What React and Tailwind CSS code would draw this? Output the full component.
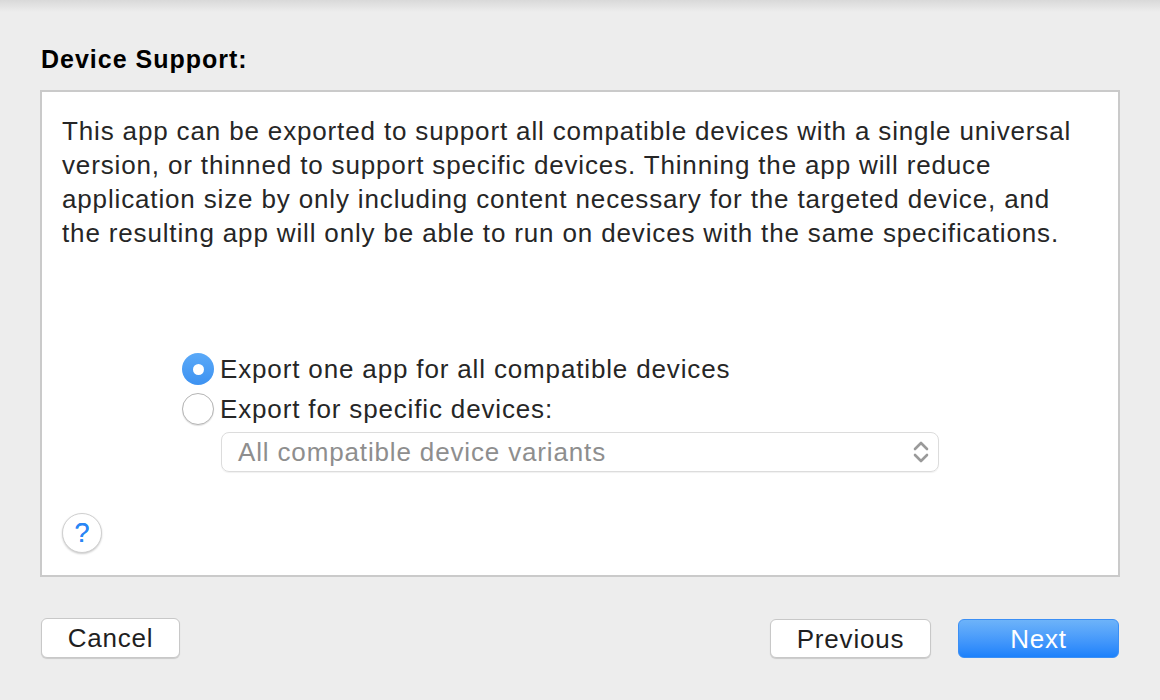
import React from "react";

export default function App() {
  const font = { fontFamily: '"Liberation Sans", Arial, Helvetica, sans-serif' };
  return (
    <div className="relative w-[1160px] h-[700px] bg-[#ededed] overflow-hidden" style={font}>
      <div className="absolute left-0 right-0 top-0 h-[12px] bg-gradient-to-b from-[#d9d9d9] to-[#ededed]" />
      <div className="px-10 pt-[43px] flex flex-col">
        <div className="h-[32px] ml-[1px] text-[25px] font-bold text-black leading-[32px] tracking-[1px]">Device Support:</div>
        <div className="mt-[15px] h-[487px] border-2 border-[#cacaca] bg-white flex flex-col pl-5 pr-[30px] pt-[22px]">
          <p className="text-[26px] leading-[34px] text-[#262626] tracking-[0.85px]">
            This app can be exported to support all compatible devices with a single universal version, or thinned to support specific devices. Thinning the app will reduce application size by only including content necessary for the targeted device, and the resulting app will only be able to run on devices with the same specifications.
          </p>
          <div className="mt-[99px] ml-[120px] flex flex-col">
            <div className="h-[40px] flex items-center">
              <div className="w-[32px] h-[32px] rounded-full bg-gradient-to-b from-[#5aa9f8] to-[#3d92f1] flex items-center justify-center">
                <div className="w-[11px] h-[11px] rounded-full bg-white" />
              </div>
              <span className="ml-[6px] text-[26px] text-[#262626] tracking-[0.85px]">Export one app for all compatible devices</span>
            </div>
            <div className="h-[40px] flex items-center">
              <div className="w-[32px] h-[32px] rounded-full bg-white border border-[#b5b5b5] shadow-[0_1px_1px_rgba(0,0,0,0.12)]" />
              <span className="ml-[6px] text-[26px] text-[#262626] tracking-[0.85px]">Export for specific devices:</span>
            </div>
            <div className="mt-[3px] ml-[39px] w-[718px] h-[40px] rounded-[8px] border border-[#dcdcdc] shadow-[0_1px_1px_rgba(0,0,0,0.06)] flex items-center pl-[16px] pr-[8px]">
              <span className="flex-1 text-[26px] text-[#8e8e8e] tracking-[0.85px]">All compatible device variants</span>
              <svg width="18" height="26" viewBox="0 0 18 26" fill="none" stroke="#9a9a9a" strokeWidth="2.6" strokeLinecap="round" strokeLinejoin="round">
                <path d="M3 10 L9 4 L15 10" />
                <path d="M3 16 L9 22 L15 16" />
              </svg>
            </div>
          </div>
          <div className="mt-[41px] w-[40px] h-[40px] rounded-full bg-white border border-[#d0d0d0] shadow-[0_1px_2px_rgba(0,0,0,0.2)] flex items-center justify-center">
            <span className="text-[27px] text-[#2a86f5] leading-none [text-shadow:0_0_0.6px_#2a86f5]">?</span>
          </div>
        </div>
        <div className="mt-[41px] mr-[1px] flex items-center justify-between">
          <button className="ml-[1px] w-[139px] h-[40px] rounded-[6px] bg-white border border-[#c8c8c8] shadow-[0_1px_1px_rgba(0,0,0,0.15)] text-[26px] text-[#1f1f1f] tracking-[0.8px]">Cancel</button>
          <div className="flex gap-[27px]">
            <button className="w-[161px] h-[39px] rounded-[6px] bg-white border border-[#c8c8c8] shadow-[0_1px_1px_rgba(0,0,0,0.15)] text-[26px] text-[#1f1f1f] tracking-[0.8px]">Previous</button>
            <button className="w-[161px] h-[39px] rounded-[6px] bg-gradient-to-b from-[#6db3f9] to-[#1b81fb] border border-[#3b8ff5] text-[26px] text-white tracking-[0.8px]">Next</button>
          </div>
        </div>
      </div>
    </div>
  );
}
